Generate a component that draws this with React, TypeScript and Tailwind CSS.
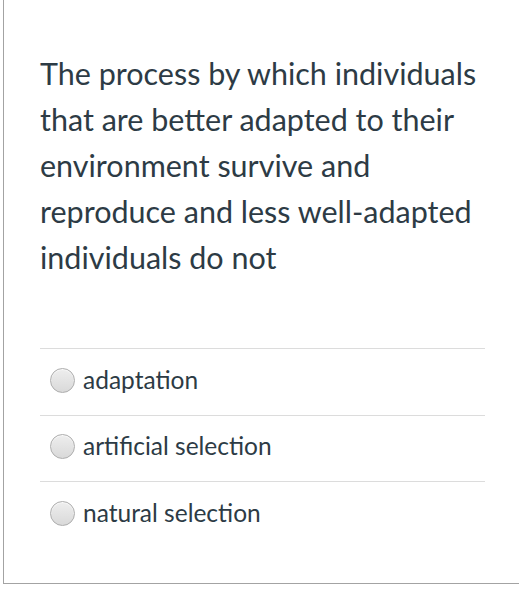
import React from 'react';

const options = ['adaptation', 'artificial selection', 'natural selection'];

const Radio: React.FC = () => (
  <span className="block h-[25px] w-[25px] shrink-0 rounded-full border border-[#adadad] bg-[linear-gradient(180deg,#eeeeee_0%,#d9d9d9_100%)] shadow-[inset_0_1px_1px_rgba(255,255,255,0.8)]" />
);

const App: React.FC = () => {
  return (
    <div className="h-[593px] w-[519px] bg-white pl-[3px] font-['Lato','Liberation_Sans',sans-serif] text-[#2d3b45]">
      <div className="h-[584px] border-b border-l border-[#a3a3a3] pl-[36px] pr-[34px]">
        <p className="pt-[50px] text-[30.5px] leading-[46px]">
          The process by which individuals that are better adapted to their environment survive and
          reproduce and less well-adapted individuals do not
        </p>
        <div className="mt-[68px]">
          {options.map((opt) => (
            <label
              key={opt}
              className="flex h-[66.5px] items-center gap-[8px] border-t border-[#dcdcdc] pb-[3px] pl-[10px]"
            >
              <Radio />
              <span className="text-[24.5px]">{opt}</span>
            </label>
          ))}
        </div>
      </div>
    </div>
  );
};

export default App;
